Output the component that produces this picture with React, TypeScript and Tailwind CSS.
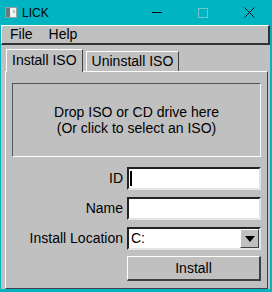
import React from "react";

const font = { fontFamily: '"Liberation Sans", Arial, sans-serif' };

function TitleBar() {
  return (
    <div className="h-[25px] flex items-center relative text-[12px] text-black">
      {/* app icon */}
      <svg width="12" height="11" viewBox="0 0 12 11" className="ml-[5px]">
        <rect x="0" y="0" width="12" height="11" fill="#9aa0a0" />
        <rect x="1" y="1" width="4" height="9" fill="#6a7a7a" />
        <rect x="5" y="1" width="6" height="9" fill="#f2f2f2" />
        <rect x="8" y="3" width="2" height="3" fill="#b8c4c4" />
      </svg>
      <span className="ml-[5px]">LICK</span>
      <div className="ml-auto flex items-center h-full">
        <div className="w-[46px] h-full flex items-center justify-center">
          <div className="w-[10px] h-[1px] bg-black" />
        </div>
        <div className="w-[46px] h-full flex items-center justify-center">
          <div className="w-[10px] h-[10px] border border-[#6fc7cd]" />
        </div>
        <div className="w-[46px] h-full flex items-center justify-center">
          <svg width="11" height="11" viewBox="0 0 11 11">
            <path d="M0.5 0.5 L10.5 10.5 M10.5 0.5 L0.5 10.5" stroke="#111" strokeWidth="1" />
          </svg>
        </div>
      </div>
    </div>
  );
}

function MenuBar() {
  return (
    <div className="h-[20px] flex items-center border-t border-l border-t-white border-l-white border-b-2 border-r-2 border-b-[#333] border-r-[#333] text-[14px]">
      <span className="ml-[8px]">File</span>
      <span className="ml-[16px]">Help</span>
    </div>
  );
}

function Tabs() {
  return (
    <div className="flex items-end h-[26px] pl-[5px]">
      <div className="h-[23px] px-[5px] flex items-center border-t border-l border-t-white border-l-white border-r border-r-[#404040] relative z-10 bg-[#c0c0c0] -mb-[1px] pb-[1px] text-[14px]">
        Install ISO
      </div>
      <div className="h-[20px] ml-[3px] px-[5px] flex items-center border-t border-l border-t-white border-l-white border-r border-r-[#404040] text-[14px]">
        Uninstall ISO
      </div>
    </div>
  );
}

function Field({ label, children }: { label: string; children: React.ReactNode }) {
  return (
    <div className="flex items-center justify-end gap-[4px]">
      <span className="text-[14px]">{label}</span>
      {children}
    </div>
  );
}

const sunken =
  "w-[134px] h-[23px] bg-white border-2 border-t-[#222] border-l-[#222] border-b-[#e4e4e4] border-r-[#e4e4e4]";

export default function App() {
  return (
    <div className="w-[272px] h-[292px] bg-[#00b4c2] flex flex-col text-black" style={font}>
      <TitleBar />
      <div className="ml-[1px] mr-[2px] mb-[3px] flex-1 flex flex-col bg-[#c0c0c0]">
        <MenuBar />
        <Tabs />
        <div className="ml-[4px] mr-[2px] flex-1 border-t border-l border-t-white border-l-white border-b border-r border-b-[#404040] border-r-[#404040] px-[6px] pt-[11px]">
          <div className="h-[74px] flex flex-col items-center justify-center border border-t-[#555] border-l-[#555] border-b-white border-r-white text-[14px] leading-[16px]">
            <span>Drop ISO or CD drive here</span>
            <span>(Or click to select an ISO)</span>
          </div>
          <div className="mt-[10px] flex flex-col gap-[7px]">
            <Field label="ID">
              <div className={sunken + " flex items-center"}>
                <div className="ml-[1px] w-[2px] h-[15px] bg-black" />
              </div>
            </Field>
            <Field label="Name">
              <div className={sunken} />
            </Field>
            <Field label="Install Location">
              <div className={sunken + " flex items-center"}>
                <span className="ml-[2px] flex-1 text-[14px]">C:</span>
                <div className="w-[19px] h-[19px] bg-[#c0c0c0] flex items-center justify-center border border-t-white border-l-white border-b-[#404040] border-r-[#404040]">
                  <svg width="10" height="6" viewBox="0 0 10 6">
                    <path d="M0 0 L10 0 L5 6 Z" fill="#000" />
                  </svg>
                </div>
              </div>
            </Field>
            <div className="flex justify-end -mt-[1px]">
              <button className="w-[134px] h-[25px] bg-[#c0c0c0] border border-t-white border-l-white border-b-2 border-r-2 border-b-[#404040] border-r-[#404040] text-[14px] flex items-center justify-center">
                Install
              </button>
            </div>
          </div>
        </div>
      </div>
    </div>
  );
}
